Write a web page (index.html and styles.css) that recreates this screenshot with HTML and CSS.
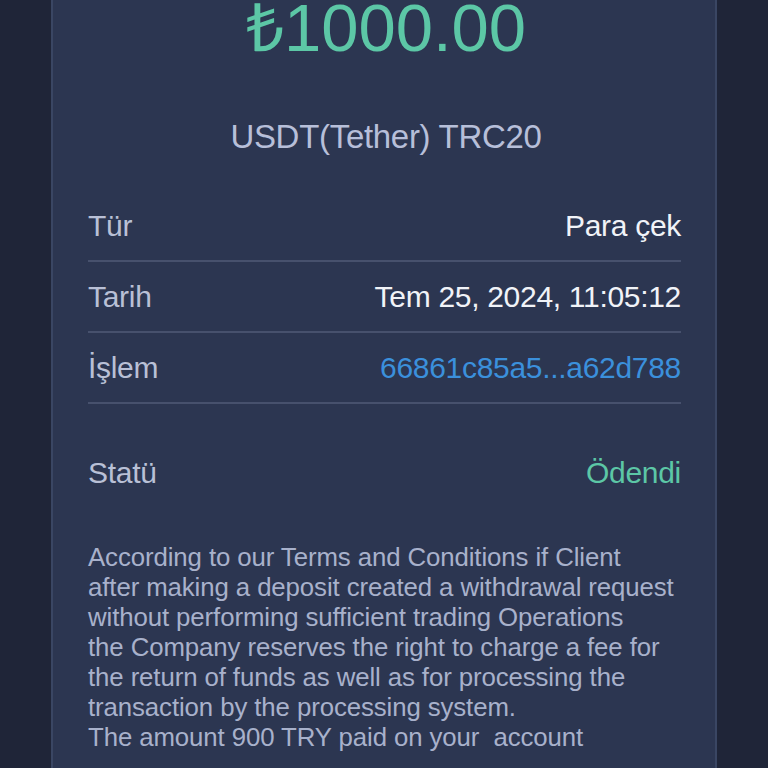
FILE: index.html
```html
<!DOCTYPE html>
<html lang="tr">
<head>
  <meta charset="UTF-8" />
  <meta name="viewport" content="width=device-width, initial-scale=1.0" />
  <title>Para çek - Detaylar</title>
  <link rel="stylesheet" href="styles.css">
</head>
<body>
  <main class="card">
    <div class="amount">₺1000.00</div>
    <div class="method">USDT(Tether) TRC20</div>
    <div class="details">
      <div class="row">
        <span class="label">Tür</span>
        <span class="value">Para çek</span>
      </div>
      <div class="row">
        <span class="label">Tarih</span>
        <span class="value">Tem 25, 2024, 11:05:12</span>
      </div>
      <div class="row">
        <span class="label">İşlem</span>
        <span class="value link">66861c85a5...a62d788</span>
      </div>
      <div class="row status">
        <span class="label">Statü</span>
        <span class="value paid">Ödendi</span>
      </div>
    </div>
    <p class="note">According to our Terms and Conditions if Client<br>after making a deposit created a withdrawal request<br>without performing sufficient trading Operations<br>the Company reserves the right to charge a fee for<br>the return of funds as well as for processing the<br>transaction by the processing system.<br>The amount 900 TRY paid on your &nbsp;account</p>
  </main>
</body>
</html>
```

FILE: styles.css
```css
html, body {
  height: 100%;
}
body {
  margin: 0;
  background: #1f2538;
  font-family: "Liberation Sans", Arial, sans-serif;
  overflow: hidden;
}
.card {
  display: flow-root;
  box-sizing: border-box;
  width: 666px;
  min-height: 100%;
  margin: 0 auto 0 51px;
  background: #2c3651;
  border-left: 2px solid #3a4663;
  border-right: 2px solid #3a4663;
  padding: 0 34px 0 35px;
}
.amount {
  color: #5cc7a6;
  font-size: 67px;
  line-height: 1;
  text-align: center;
  margin-top: -6px;
  padding-left: 3px;
}
.method {
  color: #b7bfd9;
  font-size: 33px;
  letter-spacing: -0.3px;
  text-align: center;
  margin-top: 57px;
  padding-left: 3px;
}
.details {
  margin-top: 35px;
}
.row {
  display: flex;
  justify-content: space-between;
  align-items: center;
  height: 69px;
  border-bottom: 2px solid #47516d;
  font-size: 30px;
  letter-spacing: -0.3px;
}
.row.status {
  border-bottom: none;
  height: 138px;
}
.label {
  color: #b9c0d6;
}
.value {
  color: #f1f3f8;
}
.value.link {
  color: #3b90dc;
}
.value.paid {
  color: #5cc7a6;
}
.note {
  margin: 0;
  color: #a8b1cb;
  font-size: 25.8px;
  line-height: 30px;
  letter-spacing: -0.1px;
}
```
